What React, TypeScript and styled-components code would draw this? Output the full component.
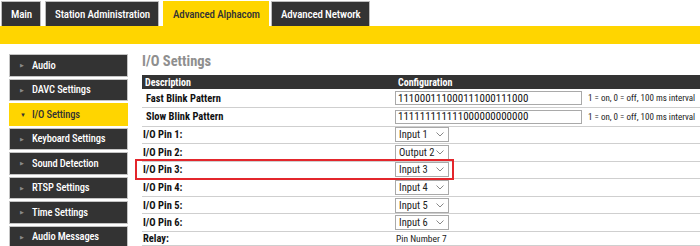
import React from 'react';
import styled, { createGlobalStyle } from 'styled-components';

const GlobalStyle = createGlobalStyle`
	body {
		margin: 0;
		background: #fff;
		font-family: "Roboto Condensed", "Liberation Sans Narrow", "Arial Narrow", Roboto, sans-serif;
		font-stretch: condensed;
		font-size: 11px;
		color: #222;
		overflow: hidden;
	}
`;

const DARK = '#333333';
const YELLOW = '#ffd500';

const TabBar = styled.nav`
	display: flex;
	align-items: flex-end;
	height: 26px;
	padding-left: 1px;
`;

const Tab = styled.div<{ $active?: boolean }>`
	height: 25px;
	box-sizing: border-box;
	display: flex;
	align-items: center;
	padding: 0 8px 0 9px;
	margin-right: ${({ $active }) => ($active ? '2px' : '4px')};
	background: ${({ $active }) => ($active ? YELLOW : DARK)};
	color: ${({ $active }) => ($active ? DARK : '#fff')};
	border: 1px solid ${({ $active }) => ($active ? YELLOW : '#bdbdbd')};
	border-bottom: none;
	font-size: 11px;
	font-weight: 500;
	letter-spacing: -0.15px;
`;

const YellowBar = styled.div`
	height: 18px;
	background: ${YELLOW};
`;

const Body = styled.div`
	display: flex;
	gap: 14px;
	padding-left: 9px;
`;

const Sidebar = styled.ul`
	list-style: none;
	margin: 10px 0 0;
	padding: 0;
	width: 119px;
	flex-shrink: 0;
	display: flex;
	flex-direction: column;
	gap: 2px;
`;

const SideItem = styled.li<{ $active?: boolean }>`
	height: 22.5px;
	box-sizing: border-box;
	display: flex;
	align-items: center;
	padding-left: 10px;
	background: ${({ $active }) => ($active ? YELLOW : DARK)};
	color: ${({ $active }) => ($active ? DARK : '#fff')};
	border: 1px solid ${({ $active }) => ($active ? YELLOW : '#c4c4c4')};
	font-size: 10.5px;
	font-weight: 500;
	letter-spacing: -0.15px;
`;

const Arrow = styled.span<{ $active?: boolean }>`
	width: 12px;
	font-size: ${({ $active }) => ($active ? '6px' : '5px')};
	color: ${({ $active }) => ($active ? DARK : '#8a8a8a')};
`;

const Content = styled.main`
	position: relative;
	flex: 1;
	min-width: 0;
	padding-top: 8px;
`;

const Title = styled.h2`
	margin: 0 0 3px;
	height: 20px;
	line-height: 20px;
	font-size: 14.5px;
	font-weight: 700;
	color: #8f8f8f;
`;

const Table = styled.table`
	width: 558px;
	table-layout: fixed;
	border-collapse: collapse;
`;

const HeadCell = styled.th<{ $w?: number }>`
	height: 14px;
	padding: 0 3px;
	background: ${DARK};
	color: #fff;
	font-size: 10px;
	font-weight: 700;
	text-align: left;
	width: ${({ $w }) => ($w ? `${$w}px` : 'auto')};
`;

const Row = styled.tr<{ $h: number }>`
	height: ${({ $h }) => $h}px;
	border-bottom: 1px solid #cfcfcf;
`;

const Label = styled.td<{ $indent?: number }>`
	padding: 0 0 0 ${({ $indent }) => $indent ?? 1}px;
	font-weight: 700;
	font-size: 10.5px;
	color: #111;
`;

const Cell = styled.td`
	padding: 0;
	white-space: nowrap;
`;

const TextInput = styled.input`
	box-sizing: border-box;
	width: 187px;
	height: 14px;
	margin: 0;
	padding: 0 2px;
	border: 1px solid #a9a9a9;
	font: inherit;
	font-size: 11px;
	color: #111;
	vertical-align: middle;
`;

const Note = styled.span`
	margin-left: 6px;
	font-size: 9px;
	vertical-align: middle;
`;

const Select = styled.span`
	box-sizing: border-box;
	display: inline-flex;
	align-items: center;
	justify-content: space-between;
	width: 54px;
	height: 15px;
	padding: 0 4px 0 3px;
	border: 1px solid #a9a9a9;
	font-size: 10.5px;
	color: #222;
	vertical-align: middle;
`;

const Plain = styled.span`
	padding-left: 1px;
	font-size: 9.5px;
`;

const Highlight = styled.div`
	position: absolute;
	left: -7px;
	top: 115px;
	width: 319px;
	height: 21px;
	box-sizing: border-box;
	border: 2px solid #e3262c;
	pointer-events: none;
`;

const Chevron = () => (
	<svg width="8" height="5" viewBox="0 0 8 5">
		<path d="M0.5 0.5 L4 4 L7.5 0.5" fill="none" stroke="#888" strokeWidth="1" />
	</svg>
);

const tabs = ['Main', 'Station Administration', 'Advanced Alphacom', 'Advanced Network'];
const menu = [
	'Audio',
	'DAVC Settings',
	'I/O Settings',
	'Keyboard Settings',
	'Sound Detection',
	'RTSP Settings',
	'Time Settings',
	'Audio Messages',
];
const pins = ['Input 1', 'Output 2', 'Input 3', 'Input 4', 'Input 5', 'Input 6'];
const blinks = [
	{ name: 'Fast Blink Pattern', value: '111000111000111000111000' },
	{ name: 'Slow Blink Pattern', value: '111111111111000000000000' },
];

export default function App() {
	return (
		<>
			<GlobalStyle />
			<TabBar>
				{tabs.map(t => (
					<Tab key={t} $active={t === 'Advanced Alphacom'}>
						{t}
					</Tab>
				))}
			</TabBar>
			<YellowBar />
			<Body>
				<Sidebar>
					{menu.map(m => {
						const active = m === 'I/O Settings';
						return (
							<SideItem key={m} $active={active}>
								<Arrow $active={active}>{active ? '▼' : '▶'}</Arrow>
								{m}
							</SideItem>
						);
					})}
				</Sidebar>
				<Content>
					<Title>I/O Settings</Title>
					<Table>
						<thead>
							<tr>
								<HeadCell $w={247}>Description</HeadCell>
								<HeadCell>Configuration</HeadCell>
							</tr>
						</thead>
						<tbody>
							{blinks.map(b => (
								<Row key={b.name} $h={18.5}>
									<Label $indent={4}>{b.name}</Label>
									<Cell>
										<TextInput readOnly value={b.value} />
										<Note>1 = on, 0 = off, 100 ms interval</Note>
									</Cell>
								</Row>
							))}
							{pins.map((p, i) => (
								<Row key={p} $h={17.6}>
									<Label>I/O Pin {i + 1}:</Label>
									<Cell>
										<Select>
											{p}
											<Chevron />
										</Select>
									</Cell>
								</Row>
							))}
							<Row $h={14}>
								<Label>Relay:</Label>
								<Cell>
									<Plain>Pin Number 7</Plain>
								</Cell>
							</Row>
						</tbody>
					</Table>
					<Highlight />
				</Content>
			</Body>
		</>
	);
}
